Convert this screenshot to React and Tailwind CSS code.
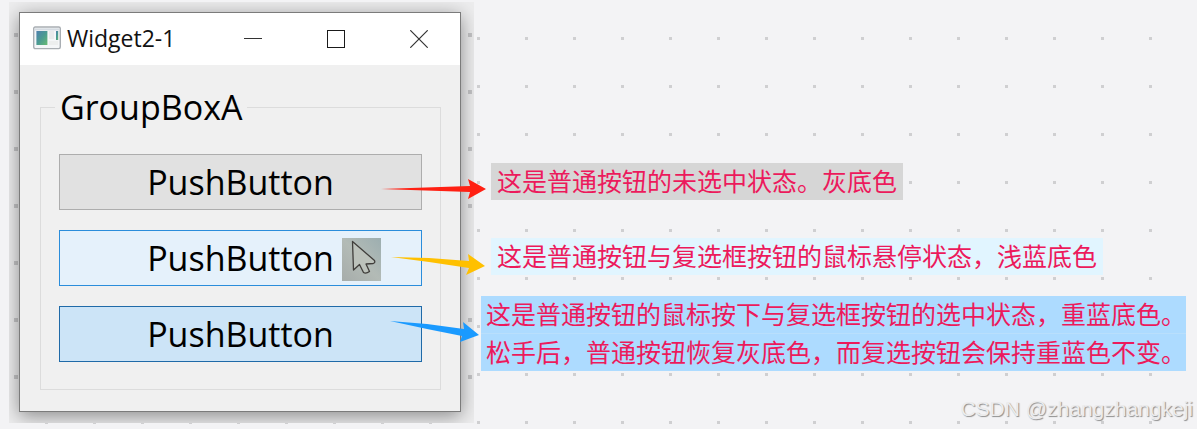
import clsx from "clsx";

const buttons = [
  { id: "normal", state: "border-[#adadad] bg-[#e1e1e1]" },
  { id: "hover", state: "border-[#2a8ddb] bg-[#e5f1fb]", pointer: true },
  { id: "pressed", state: "border-[#1f6aa8] bg-[#cce4f7]" },
];

const notes = [
  {
    id: "normal",
    lines: ["这是普通按钮的未选中状态。灰底色"],
    place: "ml-[17px]",
    fill: "bg-[#d6d6d6] px-[6px]",
    arrow: "2,26 91,23 89,16 107,26 89,36 91,29",
    arrowColor: "#ff2013",
  },
  {
    id: "hover",
    lines: ["这是普通按钮与复选框按钮的鼠标悬停状态，浅蓝底色"],
    place: "mt-[38px] ml-[17px]",
    fill: "bg-[#e1f5ff] px-[6px]",
    arrow: "12,19 50,20 90,23 89,16 106,28 87,37 90,30 50,24",
    arrowColor: "#ffc000",
  },
  {
    id: "pressed",
    lines: [
      "这是普通按钮的鼠标按下与复选框按钮的选中状态，重蓝底色。",
      "松手后，普通按钮恢复灰底色，而复选按钮会保持重蓝色不变。",
    ],
    place: "mt-[21px] ml-[7px]",
    fill: "bg-[#addbff] pl-[5px]",
    arrow: "21,25 58,28 95,33 94,26 110,39 91,46 93,40 58,33",
    arrowColor: "#1a9aff",
  },
];

function AppIcon() {
  return (
    <svg width="28" height="24" viewBox="0 0 28 24" aria-hidden="true">
      <defs>
        <linearGradient id="pane" x1="0" y1="0" x2="1" y2="1">
          <stop offset="0" stopColor="#4e7fae" />
          <stop offset="0.5" stopColor="#4a9a92" />
          <stop offset="1" stopColor="#67bb72" />
        </linearGradient>
      </defs>
      <rect x="0.7" y="1" width="26.6" height="21.6" rx="1.5" fill="#f4f6f8" stroke="#a9aeb3" strokeWidth="1.4" />
      <rect x="2" y="2.4" width="24" height="2" fill="#d5dbe2" />
      <rect x="3.4" y="5" width="11" height="14" fill="url(#pane)" />
      <rect x="16" y="5" width="5" height="8" fill="#e9ebec" />
      <rect x="23" y="5" width="2.2" height="9" fill="url(#pane)" />
      <rect x="16" y="15" width="9" height="4" fill="#eceeee" />
    </svg>
  );
}

function Pointer() {
  return (
    <svg className="absolute top-[7px] right-10" width="39" height="43" viewBox="0 0 39 43" aria-hidden="true">
      <defs>
        <linearGradient id="photo" x1="0" y1="1" x2="1" y2="0">
          <stop offset="0" stopColor="#a6acaa" />
          <stop offset="0.5" stopColor="#b3bbb6" />
          <stop offset="1" stopColor="#9caeb0" />
        </linearGradient>
      </defs>
      <rect width="39" height="43" fill="url(#photo)" />
      <path
        d="M10.5 3.5 11.5 32 17.5 26.5 21.5 34.5Q24 36 27.5 33.5L24 26 31 25.5Q33.5 25 32.5 22.5Z"
        fill="#bcc2bb"
        stroke="#403e3b"
        strokeWidth="1.3"
        strokeLinejoin="round"
      />
    </svg>
  );
}

function TitleBar() {
  const control = "flex w-[83px] shrink items-center justify-center";

  return (
    <header className="flex h-[52px] items-stretch justify-between bg-white">
      <div className="flex items-center gap-[6px] pb-[3px] pl-[13px]">
        <AppIcon />
        <h1 className="text-[23px] leading-7 whitespace-nowrap text-[#111]">Widget2-1</h1>
      </div>
      <div className="flex">
        <button type="button" aria-label="Minimize" className={control}>
          <svg width="18" height="18" viewBox="0 0 18 18">
            <path d="M0 8.5H18" stroke="#333" />
          </svg>
        </button>
        <button type="button" aria-label="Maximize" className={control}>
          <svg width="18" height="18" viewBox="0 0 18 18">
            <rect x="0.5" y="0.5" width="17" height="17" fill="none" stroke="#1a1a1a" />
          </svg>
        </button>
        <button type="button" aria-label="Close" className={control}>
          <svg width="18" height="18" viewBox="0 0 18 18">
            <path d="M0.3 0.3 17.7 17.7M17.7 0.3 0.3 17.7" stroke="#333" strokeWidth="1.2" />
          </svg>
        </button>
      </div>
    </header>
  );
}

function WidgetWindow() {
  return (
    <section className="overflow-hidden bg-[#ededee] bg-[conic-gradient(from_270deg_at_4px_4px,#c4c4c6_90deg,transparent_0)] bg-size-[454px_57px] bg-position-[5px_31px] px-[10px] pt-[10px] pr-[13px] pb-[11px] font-['Open_Sans','Noto_Sans',sans-serif]">
      <div className="border border-[#7b7b7b] bg-[#f0f0f0] shadow-[0_4px_18px_rgba(0,0,0,0.42)]">
        <TitleBar />
        <div className="pt-[19px] pr-[19px] pb-[21px] pl-5">
          <fieldset className="border border-[#dcdcdc] px-[18px] pt-6 pb-[27px]">
            <legend className="-ml-1 px-[5px] text-[34px] leading-[46px] text-black">GroupBoxA</legend>
            <div className="flex flex-col gap-5">
              {buttons.map((button) => (
                <button
                  key={button.id}
                  type="button"
                  className={clsx("relative h-14 border text-[34px] leading-[46px] text-black", button.state)}
                >
                  PushButton
                  {button.pointer ? <Pointer /> : null}
                </button>
              ))}
            </div>
          </fieldset>
        </div>
      </div>
    </section>
  );
}

function Note({ note }) {
  return (
    <li className={clsx("relative w-fit", note.place)}>
      <svg className="absolute top-0 right-full" width="112" height="48" viewBox="0 0 112 48" aria-hidden="true">
        <polygon points={note.arrow} fill={note.arrowColor} />
      </svg>
      <p className="flex flex-col gap-px bg-[#b9dffc]">
        {note.lines.map((line) => (
          <span key={line} className={clsx("pb-[2px] leading-[35px] whitespace-nowrap", note.fill)}>
            {line}
          </span>
        ))}
      </p>
    </li>
  );
}

function App() {
  return (
    <main className="relative grid min-h-screen grid-cols-[465fr_723fr] items-start overflow-hidden bg-[#f3f3f5] bg-[conic-gradient(from_270deg_at_3px_3px,#cfcfd1_90deg,transparent_0)] bg-size-[48px_48px] bg-position-[45px_37px] pt-[2px] pl-[9px]">
      <WidgetWindow />
      <ul className="pt-[161px] font-['Noto_Sans_CJK_SC',sans-serif] text-[25px] text-[#ec1a5c]">
        {notes.map((note) => (
          <Note key={note.id} note={note} />
        ))}
      </ul>
      <p className="absolute right-1 bottom-[6px] font-['Liberation_Sans',sans-serif] text-[21px] leading-7 text-[#ececed] [text-shadow:1px_1px_1px_#8c8c8c]">
        CSDN @zhangzhangkeji
      </p>
    </main>
  );
}

export default App;
